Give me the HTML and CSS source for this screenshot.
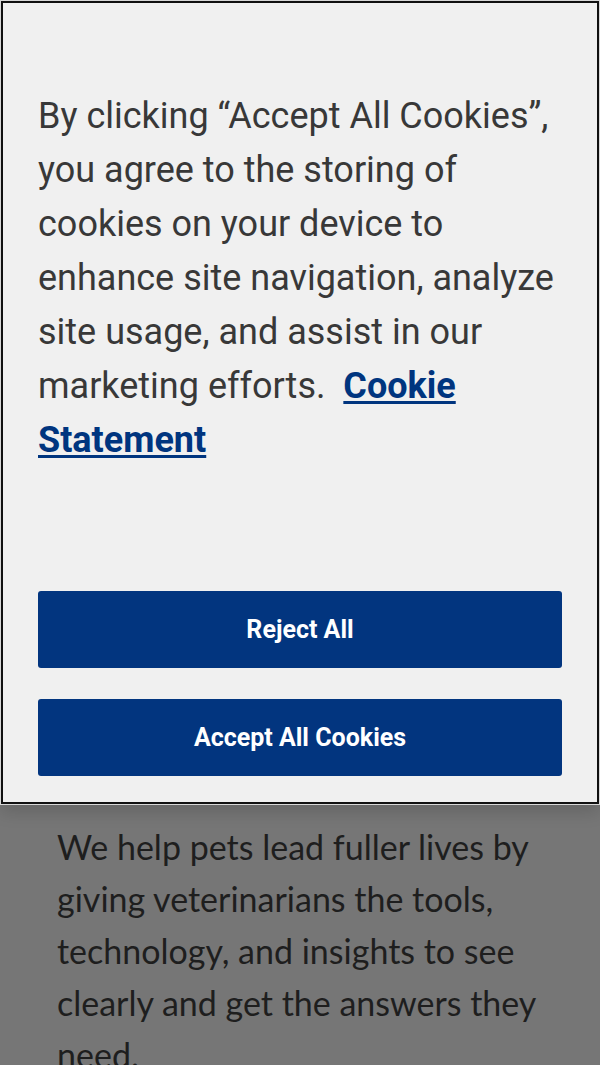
FILE: index.html
```html
<!DOCTYPE html>
<html lang="en">
<head>
  <meta charset="UTF-8">
  <title>Cookie consent</title>
  <link rel="stylesheet" href="styles.css">
</head>
<body>
  <div class="banner">
    <p class="policy">
      By clicking “Accept All Cookies”, you agree to the storing of cookies on your device to enhance site navigation, analyze site usage, and assist in our marketing efforts.&nbsp; <a href="#">Cookie Statement</a>
    </p>
    <div class="actions">
      <button class="btn">Reject All</button>
      <button class="btn">Accept All Cookies</button>
    </div>
  </div>

  <main class="page">
    <p class="intro">We help pets lead fuller lives by giving veterinarians the tools, technology, and insights to see clearly and get the answers they need.</p>
  </main>
</body>
</html>
```

FILE: styles.css
```css
body {
  margin: 0;
  background: #767676;
  overflow: hidden;
  height: 1065px;
}

.banner {
  margin: 1px 1px 0;
  background-color: #f0f0f0;
  border: 2px solid #111;
  box-shadow: 0 0 0 1px #d8d8d8, 0 8px 16px rgba(0, 0, 0, 0.15);
  padding: 86px 35px 26px;
  font-family: Roboto, "Liberation Sans", sans-serif;
  position: relative;
}

.policy {
  margin: 0;
  font-size: 36px;
  line-height: 54px;
  color: #383838;
}

.policy a {
  color: #00357f;
  font-weight: bold;
  text-decoration: underline;
  text-underline-offset: 3px;
}

.actions {
  margin-top: 124px;
  display: flex;
  flex-direction: column;
  gap: 31px;
}

.btn {
  height: 77px;
  border: none;
  border-radius: 3px;
  background-color: #02357f;
  color: #fff;
  font-family: Roboto, "Liberation Sans", sans-serif;
  font-size: 25px;
  font-weight: bold;
}

.page {
  padding: 17px 40px 0 57px;
}

.intro {
  margin: 0;
  font-family: Lato, "Open Sans", sans-serif;
  font-size: 34px;
  line-height: 52px;
  color: #1e1e1e;
}
```
